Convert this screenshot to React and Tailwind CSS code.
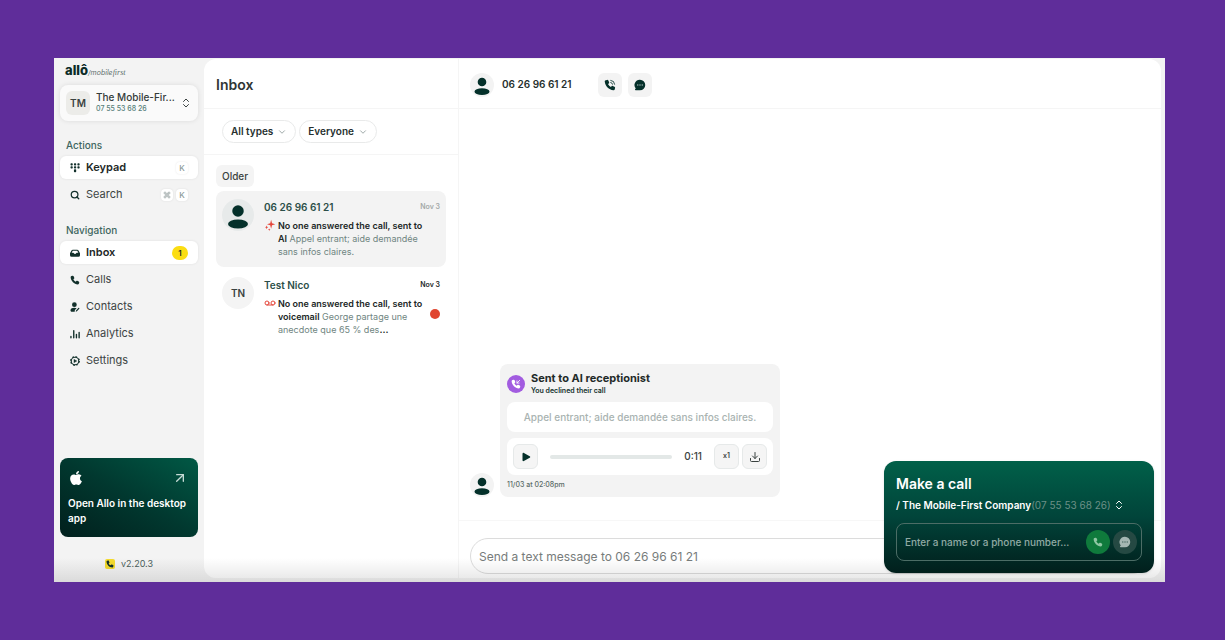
import React, { useState } from 'react';
import {
    ArrowUpRight,
    ChevronDown,
    ChevronsUpDown,
    Command,
    Download,
    Search,
    Voicemail
} from 'lucide-react';
import { FaApple } from 'react-icons/fa';

const PHONE_PATH = 'M4.200 1.200 2.300 1.600C1.400 1.800.9 2.500 1 3.400 1.600 9.500 6.500 14.400 12.600 15c.9.100 1.600-.4 1.800-1.300l.4-1.900c.1-.7-.2-1.300-.8-1.600l-2.300-1c-.6-.3-1.200-.1-1.600.4l-.9 1.100A9 9 0 0 1 5.300 6.800l1.100-.9c.5-.4.700-1 .4-1.600l-1-2.300c-.3-.6-.9-1-1.600-.8z';

const PhoneIcon = ({ className }) => (
    <svg viewBox="0 0 16 16" fill="currentColor" className={className}>
        <path d={PHONE_PATH} />
    </svg>
);

const RingingIcon = ({ className }) => (
    <svg viewBox="0 0 16 16" className={className}>
        <path d={PHONE_PATH} fill="currentColor" />
        <path d="M9 1.800A5.500 5.500 0 0 1 14.200 7M9 4.600A2.800 2.800 0 0 1 11.400 7" fill="none" stroke="currentColor" strokeWidth="1.100" strokeLinecap="round" />
    </svg>
);

const IncomingIcon = ({ className }) => (
    <svg viewBox="0 0 16 16" className={className}>
        <path d={PHONE_PATH} fill="currentColor" />
        <path d="M14 2 9.500 6.500M9.500 3v3.500H13" fill="none" stroke="currentColor" strokeWidth="1.300" strokeLinecap="round" strokeLinejoin="round" />
    </svg>
);

const KeypadIcon = ({ className }) => (
    <svg viewBox="0 0 16 16" fill="currentColor" className={className}>
        {[0.5, 5.2].map((y) => [0.8, 6.3, 11.8].map((x) => (
            <rect key={`${x}-${y}`} x={x} y={y} width="3.600" height="3.400" rx="1.200" />
        )))}
        <rect x="6.3" y="9.900" width="3.600" height="5" rx="1.200" />
    </svg>
);

const InboxIcon = ({ className }) => (
    <svg viewBox="0 0 16 16" fill="none" className={className}>
        <path d="M0 8.500 2.400 4A2.400 2.400 0 0 1 4.500 2.700h7A2.400 2.400 0 0 1 13.600 4L16 8.500v3a2.600 2.600 0 0 1-2.600 2.600H2.600A2.600 2.600 0 0 1 0 11.500z" fill="currentColor" />
        <path d="M4.400 4.400h7.200l1.800 3.300h-2.600c-.6 0-.9.500-1.200 1s-.7.800-1.600.8-1.300-.3-1.600-.8-.6-1-1.200-1H2.600z" fill="#fff" />
    </svg>
);

const ContactsIcon = ({ className }) => (
    <svg viewBox="0 0 16 16" fill="currentColor" className={className}>
        <circle cx="7" cy="4.300" r="3.800" />
        <path d="M.8 12.600C1.300 10.300 3.500 9 6.800 9c1.500 0 2.800.3 3.800.8l-2.800 3-.3 2.700H3.200C1.500 15.500.5 14.500.8 12.600z" />
        <path d="m9.200 15.400.4-2 3.700-3.900a1 1 0 0 1 1.500 1.400l-3.700 3.900z" />
    </svg>
);

const AnalyticsIcon = ({ className }) => (
    <svg viewBox="0 0 16 16" stroke="currentColor" strokeWidth="2.200" strokeLinecap="round" className={className}>
        <path d="M1.500 12v2M6 2.500V14M10.300 8.500V14M14.600 5.500V14" />
    </svg>
);

const SettingsIcon = ({ className }) => (
    <svg viewBox="0 0 16 16" fill="none" stroke="currentColor" className={className}>
        <circle cx="8" cy="8" r="6" strokeWidth="1.800" />
        <circle cx="8" cy="8" r="7.200" strokeWidth="1.600" strokeDasharray="2.830 2.830" />
        <path d="M6.300 5.200 11 8l-4.700 2.800z" fill="currentColor" strokeWidth="0.500" />
    </svg>
);

const BubbleIcon = ({ className, dots }) => (
    <svg viewBox="0 0 16 16" className={className}>
        <path d="M8 1a7 7 0 0 1 0 14H2.200c-.9 0-1.300-.9-.7-1.500l.8-1A7 7 0 0 1 8 1z" fill="currentColor" />
        <g fill={dots}>
            <circle cx="5" cy="8" r="1" />
            <circle cx="8" cy="8" r="1" />
            <circle cx="11" cy="8" r="1" />
        </g>
    </svg>
);

const SparkIcon = ({ className }) => (
    <svg viewBox="0 0 16 16" fill="currentColor" className={className}>
        <path d="M9.500 1 10.700 5.800l4.300 1.200-4.300 1.200L9.500 13 8.300 8.200 4 7l4.300-1.200z" />
        <path d="m3.500 8.500.7 1.800 1.500.7-1.500.7-.7 1.800-.7-1.800-1.500-.7 1.500-.7zM7 12.500l.5 1.200 1.200.5-1.200.5-.5 1.200-.5-1.200-1.200-.5 1.200-.5z" />
    </svg>
);

const PlayIcon = ({ className }) => (
    <svg viewBox="0 0 10 10" fill="currentColor" className={className}>
        <path d="M1.500 1.800c0-.8.800-1.200 1.400-.8l5.800 3.200c.7.400.7 1.200 0 1.600L2.900 9c-.6.400-1.400 0-1.400-.8z" />
    </svg>
);

const PersonIcon = ({ className }) => (
    <svg viewBox="0 0 24 24" fill="#04302a" className={className}>
        <circle cx="12" cy="9" r="4.300" />
        <ellipse cx="12" cy="18.700" rx="7.500" ry="3.400" />
    </svg>
);

const Avatar = () => (
    <div className="size-6 shrink-0 overflow-hidden rounded-full bg-[#f3f3f3]">
        <PersonIcon className="size-6" />
    </div>
);

const Key = ({ children }) => (
    <kbd className="flex size-3 items-center justify-center rounded-sm bg-white font-[Inter,sans-serif] text-[8px] font-medium text-[#8b9997] shadow-[0_0_2px_rgba(0,0,0,0.1)]">
        {children}
    </kbd>
);

const actions = [
    { icon: KeypadIcon, label: 'Keypad', keys: ['K'], active: true },
    { icon: Search, label: 'Search', keys: [<Command key="c" className="size-2" />, 'K'] },
];

const pages = [
    { icon: InboxIcon, label: 'Inbox', badge: 1, active: true },
    { icon: PhoneIcon, label: 'Calls' },
    { icon: ContactsIcon, label: 'Contacts' },
    { icon: AnalyticsIcon, label: 'Analytics' },
    { icon: SettingsIcon, label: 'Settings' },
];

const threads = [
    {
        name: '06 26 96 61 21',
        date: 'Nov 3',
        icon: SparkIcon,
        title: 'No one answered the call, sent to AI',
        text: 'Appel entrant; aide demandée sans infos claires.',
        selected: true,
    },
    {
        name: 'Test Nico',
        initials: 'TN',
        date: 'Nov 3',
        icon: Voicemail,
        title: 'No one answered the call, sent to voicemail',
        text: 'George partage une anecdote que 65 % des',
        more: true,
        unread: true,
    },
];

function NavItem({ item }) {
    return (
        <a
            href="#"
            className={`flex h-[23px] items-center gap-1.5 rounded-md px-2.5 text-[11px] ${item.active ? 'bg-white font-semibold text-[#222827] shadow-[0_0_3px_rgba(0,0,0,0.08)]' : 'text-[#3c4443]'}`}
        >
            <item.icon className="size-2.5 shrink-0 text-[#12302b]" strokeWidth={3} />
            <span className="flex-1">{item.label}</span>
            {item.keys && (
                <span className="flex gap-[3px]">
                    {item.keys.map((k, i) => <Key key={i}>{k}</Key>)}
                </span>
            )}
            {item.badge && (
                <span className="flex h-3.5 w-4 items-center justify-center rounded-full bg-[#fbdd12] text-[8px] font-semibold">
                    {item.badge}
                </span>
            )}
        </a>
    );
}

function Sidebar() {
    return (
        <aside className="flex w-[150px] shrink-0 flex-col px-1.5">
            <div className="flex items-baseline pt-1 pl-[5px] text-[13px] leading-4 font-extrabold text-[#0b2b27]">
                allô
                <span className="text-[7px] font-normal text-[#5e706d] italic">
                    /mobile<span className="font-['Liberation_Serif',serif] text-[8px]">first</span>
                </span>
            </div>

            <button className="mt-1 flex h-9 items-center gap-1.5 rounded-lg bg-[#fafafa] px-1.5 text-left shadow-[0_0_5px_rgba(0,0,0,0.1)]">
                <span className="flex size-6 items-center justify-center rounded-md bg-[#ecece9] text-[10px] font-semibold text-[#3a4240]">TM</span>
                <span className="min-w-0 flex-1 whitespace-nowrap">
                    <span className="block text-[10px] leading-3 font-medium text-[#333b39]">The Mobile-Fir...</span>
                    <span className="block text-[7px] leading-3 font-medium text-[#57807a]">07 55 53 68 26</span>
                </span>
                <ChevronsUpDown className="size-3 shrink-0 text-[#3c4443]" />
            </button>

            <h2 className="mt-4 pl-1.5 text-[10px] leading-4 font-medium text-[#3e6660]">Actions</h2>
            <nav className="mt-[3px] flex flex-col gap-1">
                {actions.map((item) => <NavItem key={item.label} item={item} />)}
            </nav>

            <h2 className="mt-4 pl-1.5 text-[10px] leading-4 font-medium text-[#3e6660]">Navigation</h2>
            <nav className="mt-[3px] flex flex-col gap-1">
                {pages.map((item) => <NavItem key={item.label} item={item} />)}
            </nav>

            <a href="#" className="mt-auto flex h-[79px] flex-col rounded-lg bg-linear-to-tr from-[#01201d] via-[#01382f] to-[#015945] px-2 pt-3 text-white">
                <span className="flex items-center justify-between pr-0.5">
                    <FaApple className="size-4" />
                    <ArrowUpRight className="size-4 text-[#c5dbd5]" />
                </span>
                <span className="mt-2.5 text-[10px] leading-[15px] font-semibold">Open Allo in the desktop app</span>
            </a>

            <div className="flex h-[45px] items-center justify-center gap-1.5 pt-2 text-[9px] text-[#4c5f5c]">
                <span className="flex size-2.5 items-center justify-center rounded-xs bg-[#f5db2e]">
                    <PhoneIcon className="size-2 text-[#12302b]" />
                </span>
                v2.20.3
            </div>
        </aside>
    );
}

function Thread({ thread }) {
    return (
        <li className={`flex h-[76px] gap-2.5 rounded-lg px-1.5 pt-2 ${thread.selected ? 'bg-[#f3f3f3]' : ''}`}>
            <div className={`flex size-8 shrink-0 items-center justify-center overflow-hidden rounded-full text-[10px] font-semibold text-[#3a4240] ${thread.selected ? 'bg-[#e7eaea]' : 'bg-[#f4f4f4]'}`}>
                {thread.initials || <PersonIcon className="size-8" />}
            </div>
            <div className="min-w-0 flex-1">
                <div className="flex items-center justify-between">
                    <h3 className="text-[10px] leading-4 font-semibold text-[#2c4f49]">{thread.name}</h3>
                    <time className={`text-[7px] font-semibold ${thread.unread ? 'text-[#222827]' : 'text-[#a3a9a8]'}`}>{thread.date}</time>
                </div>
                <div className="mt-1 flex items-start gap-0.5">
                    <thread.icon className="size-3 shrink-0 text-[#e5483d]" />
                    <p className="w-[146px] shrink-0 text-[9px] leading-[13px] text-[#6f8581]">
                        <b className="font-semibold text-[#222827]">{thread.title}</b> {thread.text}
                        {thread.more && <b className="text-[#222827]">...</b>}
                    </p>
                    {thread.unread && <span className="mt-3 ml-1 size-2.5 shrink-0 rounded-full bg-[#e0452f]" />}
                </div>
            </div>
        </li>
    );
}

function InboxColumn() {
    return (
        <section className="flex w-[255px] shrink-0 flex-col border-r border-[#f5f5f5]">
            <header className="flex h-[50px] items-center border-b border-[#f5f5f5] px-3 pt-0.5">
                <h1 className="text-sm font-semibold text-[#303635]">Inbox</h1>
            </header>
            <div className="flex h-[46px] items-center gap-[3px] border-b border-[#f5f5f5] px-[18px]">
                {['All types', 'Everyone'].map((label) => (
                    <button key={label} className="flex h-[23px] items-center gap-1 rounded-full border border-[#e9eaea] px-2 text-[10px] font-semibold text-[#26302e]">
                        {label}
                        <ChevronDown className="size-2.5 text-[#8b9997]" />
                    </button>
                ))}
            </div>
            <div className="px-3 pt-2.5">
                <span className="flex h-[22px] w-fit items-center rounded-md bg-[#f4f4f4] px-1.5 text-[10px] font-medium text-[#3a4240]">Older</span>
                <ul className="mt-1 flex flex-col gap-0.5">
                    {threads.map((thread) => <Thread key={thread.name} thread={thread} />)}
                </ul>
            </div>
        </section>
    );
}

function CallCard() {
    const [speed, setSpeed] = useState(1);

    return (
        <div className="flex w-[280px] flex-col rounded-lg bg-[#f3f3f3] px-[7px] pt-[7px] pb-1.5">
            <div className="flex items-center gap-1.5">
                <span className="flex size-[18px] items-center justify-center rounded-full bg-[#a25ce0] text-white">
                    <IncomingIcon className="size-2.5" />
                </span>
                <div>
                    <h3 className="text-[11px] leading-[14px] font-bold text-[#1f2a28]">Sent to AI receptionist</h3>
                    <p className="text-[7px] leading-3 font-semibold text-[#12302b]">You declined their call</p>
                </div>
            </div>
            <p className="mt-[5px] flex h-[30px] items-center justify-center rounded-lg bg-white text-[10px] font-medium text-[#a9b3b1]">
                Appel entrant; aide demandée sans infos claires.
            </p>
            <div className="mt-1.5 flex h-[37px] items-center rounded-lg bg-white px-1.5">
                <button aria-label="Play" className="flex size-[25px] items-center justify-center rounded-md border border-[#e6e9e9] bg-[#f5f5f5]">
                    <PlayIcon className="size-2.5 text-[#04302a]" />
                </button>
                <div className="mx-3 h-1 flex-1 rounded-full bg-[#e3e8e7]" />
                <span className="text-[10px] font-medium text-[#3a4240]">0:11</span>
                <button
                    onClick={() => setSpeed(speed === 1 ? 2 : 1)}
                    className="ml-3 flex size-[25px] items-center justify-center rounded-md border border-[#e6e9e9] bg-[#f5f5f5] text-[7px] font-semibold text-[#3a4240]"
                >
                    x{speed}
                </button>
                <button aria-label="Download" className="ml-[3px] flex size-[25px] items-center justify-center rounded-md border border-[#e6e9e9] bg-[#f5f5f5]">
                    <Download className="size-3 text-[#3a4240]" />
                </button>
            </div>
            <time className="mt-1 text-[7px] leading-3 font-medium text-[#5b6b68]">11/03 at 02:08pm</time>
        </div>
    );
}

function Conversation() {
    return (
        <section className="flex min-w-0 flex-1 flex-col">
            <header className="flex h-[50px] items-center border-b border-[#f5f5f5] px-[11px] pt-0.5">
                <Avatar />
                <h2 className="ml-2 text-[10px] font-semibold text-[#26302e]">06 26 96 61 21</h2>
                <div className="ml-[26px] flex gap-1.5">
                    <button aria-label="Call" className="flex size-6 items-center justify-center rounded-md bg-[#f3f3f3]">
                        <RingingIcon className="size-3 text-[#04302a]" />
                    </button>
                    <button aria-label="Message" className="flex size-6 items-center justify-center rounded-md bg-[#f3f3f3]">
                        <BubbleIcon className="size-3 text-[#04302a]" dots="#9fb5b1" />
                    </button>
                </div>
            </header>
            <div className="flex flex-1 items-end gap-1.5 px-[11px] pb-[23px]">
                <Avatar />
                <CallCard />
            </div>
            <div className="border-t border-[#f7f7f7] px-[11px] pt-[17px] pb-1">
                <input
                    type="text"
                    aria-label="Text message"
                    placeholder="Send a text message to 06 26 96 61 21"
                    className="block h-9 w-full rounded-full border border-[#dcdcdc] px-2 text-xs outline-none placeholder:text-[#777c7b]"
                />
            </div>
        </section>
    );
}

// Floating dialer, stays above the conversation
function CallWidget() {
    return (
        <div className="absolute right-[11px] bottom-[9px] z-20 w-[270px] rounded-xl bg-linear-to-b from-[#016049] via-[#01443a] to-[#011f1c] p-3 text-white shadow-sm">
            <h2 className="text-sm leading-[22px] font-semibold">Make a call</h2>
            <button className="flex h-5 items-center text-[10px] font-semibold whitespace-nowrap">
                <span>/ The Mobile-First Company</span>
                <span className="font-normal text-[#6c9087]">(07 55 53 68 26)</span>
                <ChevronsUpDown className="ml-0.5 size-3" />
            </button>
            <div className="mt-2 flex h-[38px] items-center gap-[3px] rounded-lg border border-[#4c6d66] pr-1 pl-2">
                <input
                    type="text"
                    aria-label="Name or phone number"
                    placeholder="Enter a name or a phone number..."
                    className="min-w-0 flex-1 bg-transparent text-[10px] font-medium outline-none placeholder:text-[#91aaa4]"
                />
                <button aria-label="Start call" className="flex size-6 items-center justify-center rounded-full bg-[#0f7a3c]">
                    <PhoneIcon className="size-2.5 text-[#8fc7a3]" />
                </button>
                <button aria-label="Send message" className="flex size-6 items-center justify-center rounded-full bg-[#254943]">
                    <BubbleIcon className="size-3 text-[#a5b7b3]" dots="#4c6d66" />
                </button>
            </div>
        </div>
    );
}

export default function App() {
    return (
        <div className="flex h-screen bg-[#5f2d9a] pt-[58px] pr-[60px] pb-[58px] pl-[54px] font-[Inter,sans-serif]">
            <div className="relative flex min-w-0 flex-1 overflow-hidden bg-[#f3f3f3]">
                <Sidebar />
                <main className="mt-px mr-1 mb-1 flex min-w-0 flex-1 rounded-xl bg-white">
                    <InboxColumn />
                    <Conversation />
                </main>
                <CallWidget />
                <div className="pointer-events-none absolute inset-x-0 bottom-0 z-10 h-6 bg-linear-to-b from-transparent to-black/10" />
            </div>
        </div>
    );
}
